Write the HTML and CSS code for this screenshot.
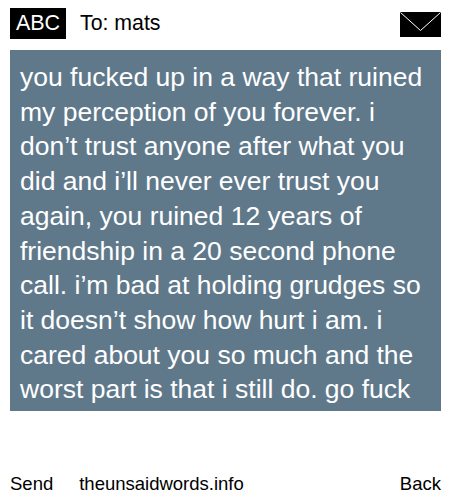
FILE: index.html
```html
<!DOCTYPE html>
<html lang="en">

<head>
   <meta charset="UTF-8">
   <meta name="viewport" content="width=device-width, initial-scale=1.0">
   <title>The Unsaid Words</title>
   <link rel="stylesheet" href="styles.css">
</head>

<body>
   <header class="top">
      <span class="abc">ABC</span>
      <span class="to">To: mats</span>
      <svg class="envelope" width="41" height="25" viewBox="0 0 41 25">
         <rect width="41" height="25" fill="#000" />
         <path d="M0.5 0.5 L20.5 18.5 L40.5 0.5" fill="none" stroke="#fff" stroke-width="1" />
      </svg>
   </header>
   <div class="message">
      <p>you fucked up in a way that ruined my perception of you forever. i don’t trust anyone after what you did and i’ll never ever trust you again, you ruined 12 years of friendship in a 20 second phone call. i’m bad at holding grudges so it doesn’t show how hurt i am. i cared about you so much and the worst part is that i still do. go fuck</p>
   </div>
   <footer class="bottom">
      <span class="send">Send</span>
      <span class="site">theunsaidwords.info</span>
      <span class="back">Back</span>
   </footer>
</body>

</html>
```

FILE: styles.css
```css
* {
   padding: 0;
   margin: 0;
   box-sizing: border-box;
}

body {
   width: 450px;
   height: 500px;
   padding: 8px 9px 0 10px;
   background-color: #fff;
   color: #000;
   font-family: "Liberation Sans", Arial, sans-serif;
   overflow: hidden;
}

.top {
   display: flex;
   align-items: center;
   height: 31px;
}

.abc {
   width: 56px;
   height: 31px;
   line-height: 30px;
   background-color: #000;
   color: #fff;
   font-size: 21.5px;
   text-align: center;
}

.to {
   margin-left: 14px;
   font-size: 21.3px;
}

.envelope {
   margin-left: auto;
   margin-top: 1px;
}

.message {
   height: 361px;
   margin-top: 11px;
   padding: 10px;
   background-color: #5f798b;
   color: #fff;
   font-size: 26.5px;
   line-height: 34.7px;
   overflow: hidden;
}

.bottom {
   display: flex;
   margin-top: 62px;
   font-size: 18.5px;
   line-height: 22px;
}

.site {
   margin-left: 26px;
}

.back {
   margin-left: auto;
}
```
